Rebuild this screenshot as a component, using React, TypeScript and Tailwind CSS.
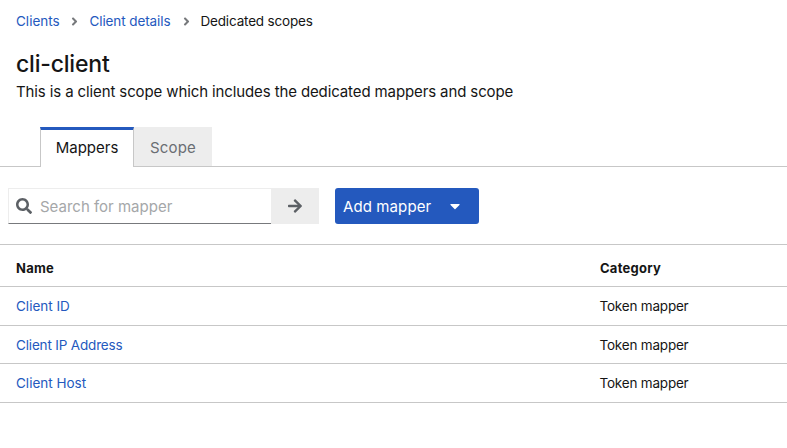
import React from "react";
import { FaAngleRight, FaArrowRight, FaCaretDown, FaSearch } from "react-icons/fa";

const mappers = [
  { name: "Client ID", category: "Token mapper", height: "h-[39px]", tracking: "tracking-normal" },
  { name: "Client IP Address", category: "Token mapper", height: "h-[38px]", tracking: "tracking-[-0.17px]" },
  { name: "Client Host", category: "Token mapper", height: "h-[39px]", tracking: "tracking-normal" },
];

function Breadcrumb() {
  return (
    <nav className="flex h-[42px] items-center whitespace-nowrap pl-4 text-[13.5px] leading-5">
      <div className="flex w-[73.5px] shrink-0 items-center text-[#2459be]">
        <a className="w-[52px] tracking-normal">Clients</a>
        <FaAngleRight className="size-[13px] text-[#77797c]" />
      </div>
      <div className="flex w-[111px] shrink-0 items-center text-[#2459be]">
        <a className="w-[90px] tracking-[-0.1px]">Client details</a>
        <FaAngleRight className="size-[13px] text-[#77797c]" />
      </div>
      <span className="tracking-[-0.17px] text-[#151515]">Dedicated scopes</span>
    </nav>
  );
}

export default function App() {
  return (
    <main className="h-[448px] w-[787px] overflow-hidden bg-white font-['Inter',sans-serif] text-[#151515]">
      <Breadcrumb />
      <header className="h-[85px] pl-4 pt-[6px]">
        <h1 className="text-[23px] font-medium leading-8 tracking-[-0.2px]">cli-client</h1>
        <p className="pt-px text-[15px] leading-[22px] tracking-[-0.115px]">
          This is a client scope which includes the dedicated mappers and scope
        </p>
      </header>
      <div className="flex h-10 text-[15px]">
        <div className="w-10 border-b border-[#c7c7c7]" />
        <button className="w-[94px] border-x border-t-3 border-x-[#c7c7c7] border-t-[#2459be] pb-px">Mappers</button>
        <button className="w-[78px] border-b border-[#c7c7c7] bg-[#ededed] pt-1 text-[#6a6e73]">
          <span className="tracking-[0.15px]">Scope</span>
        </button>
        <div className="flex-1 border-b border-[#c7c7c7]" />
      </div>
      <div className="flex h-[77px] pl-2 pt-[21px] text-[15px]">
        <div className="flex h-9 w-[263px] items-center border border-r-0 border-[#ededed] border-b-[#77797c] pl-[7px]">
          <FaSearch className="mr-2 size-4 text-[#5c6065]" />
          <span className="pt-0.5 text-[#a5a7a9]">Search for mapper</span>
        </div>
        <button className="flex h-9 w-12 items-center justify-center bg-[#ededed] text-[#5c6065]">
          <FaArrowRight className="size-4" />
        </button>
        <button className="ml-4 flex h-9 w-36 items-center rounded-[3px] bg-[#2459be] pl-2 text-white">
          <span className="w-[104px] pt-0.5 text-left tracking-[0.1px]">Add mapper</span>
          <FaCaretDown className="size-4" />
        </button>
      </div>
      <section className="border-t border-[#c7c7c7] text-[13.5px]">
        <div className="flex h-[42px] items-center border-b border-[#c7c7c7] pl-4 pt-[6px] text-[13px] font-bold tracking-[0.25px]">
          <span className="w-[584px]">Name</span>
          <span>Category</span>
        </div>
        {mappers.map((m) => (
          <div key={m.name} className={`flex items-center border-b border-[#c7c7c7] pl-4 pt-px ${m.height}`}>
            <a className={`w-[583.5px] text-[#2459be] ${m.tracking}`}>{m.name}</a>
            <span className="tracking-[-0.2px]">{m.category}</span>
          </div>
        ))}
      </section>
    </main>
  );
}
